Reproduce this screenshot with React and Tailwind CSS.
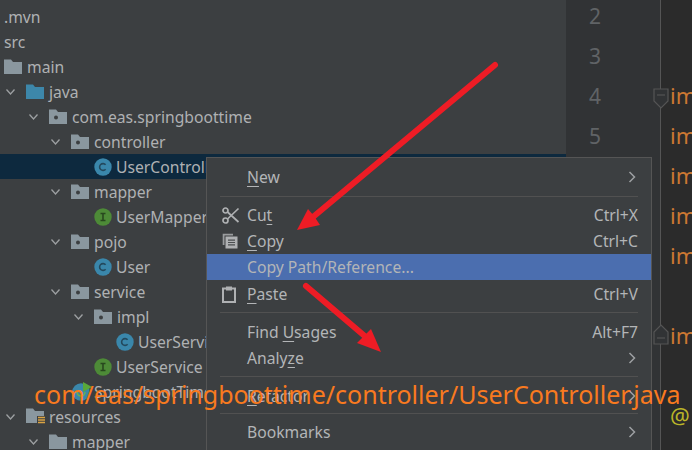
import React from 'react';

const FONT = 'font-["Noto_Sans",sans-serif]';

const Chevron = () => (
    <svg width="12" height="8" viewBox="0 0 12 8" fill="none" stroke="#9da0a2" strokeWidth="1.3">
        <path d="M1.5 1.5 L5.5 6 L9.5 1.5" />
    </svg>
);

const Folder = ({ color = '#8a979f', dot }) => (
    <svg width="18" height="15" viewBox="0 0 18 15">
        <path d="M0 0.5 H7 L9 3 H18 V15 H0 Z" fill={color} />
        {dot && <circle cx="7" cy="8.5" r="2" fill="#3c3f41" />}
    </svg>
);

const ResourceFolder = () => (
    <svg width="20" height="17" viewBox="0 0 20 17">
        <path d="M0 0.5 H7 L9 3 H18 V8 H11 V15 H0 Z" fill="#8a979f" />
        <path d="M12 9.5 H19 M12 12 H19 M12 14.5 H19" stroke="#d9a343" strokeWidth="1.5" />
    </svg>
);

const Badge = ({ letter, bg, fg }) => (
    <svg width="18" height="18" viewBox="0 0 18 18">
        <circle cx="9" cy="9" r="8.7" fill={bg} />
        {letter === 'C'
            ? <path d="M11.6 6.8 A3.4 3.4 0 1 0 11.6 11.2" fill="none" stroke={fg} strokeWidth="1.6" />
            : <path d="M6.5 5.5 H11.5 M6.5 12.5 H11.5 M9 5.5 V12.5" fill="none" stroke={fg} strokeWidth="1.6" />}
    </svg>
);

const ClassIcon = () => <Badge letter="C" bg="#3a87ab" fg="#23495d" />;
const InterfaceIcon = () => <Badge letter="I" bg="#4d8a37" fg="#28481e" />;

const AppIcon = () => (
    <span className="relative block w-[20px] h-[18px]">
        <svg width="18" height="18" viewBox="0 0 18 18">
            <circle cx="9" cy="9" r="8.7" fill="#3a87ab" />
            <path d="M5 9 a4 4 0 0 0 8 0" fill="none" stroke="#6cb04d" strokeWidth="1.6" />
        </svg>
        <svg className="absolute top-[-1px] left-[11px]" width="9" height="10" viewBox="0 0 9 10">
            <path d="M0 0 L9 5 L0 10 Z" fill="#59a83a" />
        </svg>
    </span>
);

const treeRows = [
    { name: '.mvn', pad: 'pl-[4px]' },
    { name: 'src', pad: 'pl-[4px]' },
    { name: 'main', pad: 'pl-[4px]', icon: <Folder /> },
    { name: 'java', pad: 'pl-[4px]', open: true, icon: <Folder color="#3d87aa" /> },
    { name: 'com.eas.springboottime', pad: 'pl-[27px]', open: true, icon: <Folder dot /> },
    { name: 'controller', pad: 'pl-[49px]', open: true, icon: <Folder dot /> },
    { name: 'UserController', pad: 'pl-[94px]', icon: <ClassIcon />, leaf: true, selected: true },
    { name: 'mapper', pad: 'pl-[49px]', open: true, icon: <Folder dot /> },
    { name: 'UserMapper', pad: 'pl-[94px]', icon: <InterfaceIcon />, leaf: true },
    { name: 'pojo', pad: 'pl-[49px]', open: true, icon: <Folder dot /> },
    { name: 'User', pad: 'pl-[94px]', icon: <ClassIcon />, leaf: true },
    { name: 'service', pad: 'pl-[49px]', open: true, icon: <Folder dot /> },
    { name: 'impl', pad: 'pl-[72px]', open: true, icon: <Folder dot /> },
    { name: 'UserServiceImpl', pad: 'pl-[116px]', icon: <ClassIcon />, leaf: true },
    { name: 'UserService', pad: 'pl-[94px]', icon: <InterfaceIcon />, leaf: true },
    { name: 'SpringbootTimeApplication', pad: 'pl-[72px]', icon: <AppIcon />, leaf: true },
    { name: 'resources', pad: 'pl-[4px]', open: true, icon: <ResourceFolder /> },
    { name: 'mapper', pad: 'pl-[27px]', open: true, icon: <Folder /> },
];

const TreeRow = ({ row }) => (
    <div className={`flex items-center h-[25px] shrink-0 whitespace-nowrap ${row.pad} ${row.selected ? 'bg-[#0d293e]' : ''}`}>
        {row.open && <span className="w-[22px] flex items-center pl-[1px]"><Chevron /></span>}
        {row.icon && <span className={`flex items-center ${row.leaf ? 'w-[22px]' : 'w-[23px]'}`}>{row.icon}</span>}
        <span className="pt-[3px]">{row.name}</span>
    </div>
);

const Scissors = () => (
    <svg width="18" height="17" viewBox="0 0 18 17" fill="none" stroke="#afb1b3" strokeWidth="1.7">
        <circle cx="3.5" cy="3.5" r="2.5" />
        <circle cx="3.5" cy="13.5" r="2.5" />
        <path d="M5.5 5 L16.5 15 M5.5 12 L16.5 1.5" />
    </svg>
);

const CopyIcon = () => (
    <svg width="16" height="16" viewBox="0 0 16 16">
        <path d="M0.7 0.7 H11 V2.5 H2.5 V12 H0.7 Z" fill="#9a9c9e" />
        <rect x="3.5" y="3.5" width="12" height="12" fill="#afb1b3" />
        <path d="M6 7.2 H13 M6 9.5 H13 M6 11.8 H13" stroke="#4c4f51" strokeWidth="1.2" />
    </svg>
);

const PasteIcon = () => (
    <svg width="14" height="17" viewBox="0 0 14 17" fill="none">
        <rect x="1" y="2.5" width="12" height="13.5" stroke="#afb1b3" strokeWidth="2" />
        <rect x="4" y="0.5" width="6" height="4" fill="#afb1b3" />
    </svg>
);

const ChevronRight = () => (
    <svg width="8" height="12" viewBox="0 0 8 12" fill="none" stroke="#9da0a2" strokeWidth="1.5">
        <path d="M1.5 1 L6.5 6 L1.5 11" />
    </svg>
);

const Key = ({ children }) => <span className="underline underline-offset-[3px]">{children}</span>;

const MenuItem = ({ icon, shortcut, arrow, active, className = '', children }) => (
    <div className={`flex items-center h-[26px] shrink-0 pr-[13px] ${active ? 'bg-[#4b6eaf]' : ''} ${className}`}>
        <span className="w-[40px] pl-[15px] flex items-center justify-start">{icon}</span>
        <span className="flex-1 pt-[2px] whitespace-nowrap">{children}</span>
        {shortcut && <span className="pt-[2px] whitespace-nowrap">{shortcut}</span>}
        {arrow && <span className="pr-[2px] flex items-center"><ChevronRight /></span>}
    </div>
);

const Separator = ({ className }) => <div className={`h-px shrink-0 ml-[13px] mr-[13px] bg-[#515151] ${className}`} />;

const ContextMenu = () => (
    <div className="absolute left-[206px] top-[157px] bottom-0 w-[446px] flex flex-col overflow-hidden pt-[6px] bg-[#3c3f41] border border-b-0 border-[#555555] text-[#b3b5b7] text-[15.7px]">
        <MenuItem arrow><Key>N</Key>ew</MenuItem>
        <Separator className="mt-[6px] mb-[5px]" />
        <MenuItem icon={<Scissors />} shortcut="Ctrl+X">Cu<Key>t</Key></MenuItem>
        <MenuItem icon={<CopyIcon />} shortcut="Ctrl+C"><Key>C</Key>opy</MenuItem>
        <MenuItem active>Copy Path/Reference...</MenuItem>
        <MenuItem className="mt-px" icon={<PasteIcon />} shortcut="Ctrl+V"><Key>P</Key>aste</MenuItem>
        <Separator className="mt-[5px] mb-[6px]" />
        <MenuItem shortcut="Alt+F7">Find <Key>U</Key>sages</MenuItem>
        <MenuItem arrow>Analy<Key>z</Key>e</MenuItem>
        <Separator className="mt-[5px] mb-[6px]" />
        <MenuItem arrow><Key>R</Key>efactor</MenuItem>
        <Separator className="mt-[4px] mb-[5px]" />
        <MenuItem arrow>Bookmarks</MenuItem>
    </div>
);

const codeLines = ['', '', 'import', 'import', 'import', 'import', 'import', '', 'import', '', '@'];

const FoldMarker = ({ flip, className }) => (
    <svg className={`absolute ${className}`} width="16" height="21" viewBox="0 0 16 21" fill="#313335" stroke="#555555" strokeWidth="1.2">
        <path d={flip ? 'M1 20 V8 L8 1 L15 8 V20 Z' : 'M1 1 H15 V13 L8 20 L1 13 Z'} />
        <path d={flip ? 'M4 14 H12' : 'M4 7 H12'} />
    </svg>
);

const Arrows = () => (
    <svg className="absolute inset-0" width="692" height="450" viewBox="0 0 692 450">
        <path d="M495 65 L313 217" stroke="#ee1c25" strokeWidth="6" strokeLinecap="round" fill="none" />
        <path d="M297 230 L308 209 L314 216 L320 225 Z" fill="#ee1c25" />
        <path d="M306 286 L367 338" stroke="#ee1c25" strokeWidth="6" strokeLinecap="round" fill="none" />
        <path d="M381 352 L371 329 L364 336 L357 343 Z" fill="#ee1c25" />
    </svg>
);

export default function App() {
    return (
        <div className={`relative flex w-[692px] h-[450px] overflow-hidden bg-[#2b2b2b] ${FONT}`}>
            <div className="w-[566px] shrink-0 flex flex-col pt-[4px] bg-[#3c3f41] text-[#afb1b3] text-[15.7px]">
                {treeRows.map((row, i) => <TreeRow key={i} row={row} />)}
            </div>
            <div className="w-[95px] shrink-0 flex flex-col -mt-[3px] bg-[#313335] border-r border-[#555555] pl-[23px] text-[#606366] text-[21px]">
                {codeLines.map((_, i) => (
                    <div key={i} className="flex items-center h-[40px] shrink-0">{i + 2}</div>
                ))}
            </div>
            <div className="flex-1 flex flex-col -mt-[5px] pl-[9px] overflow-hidden text-[#cc7832] text-[22px]">
                {codeLines.map((line, i) => (
                    <div key={i} className={`flex items-center h-[40px] shrink-0 ${line === '@' ? 'text-[#bbb529]' : ''}`}>{line}</div>
                ))}
            </div>
            <FoldMarker className="left-[653px] top-[88px]" />
            <FoldMarker flip className="left-[653px] top-[324px]" />
            <ContextMenu />
            <Arrows />
            <div className="absolute left-[34px] top-[377px] whitespace-nowrap text-[#f97a1f] text-[25px] leading-[34px]">
                com/eas/springboottime/controller/UserController.java
            </div>
        </div>
    );
}
